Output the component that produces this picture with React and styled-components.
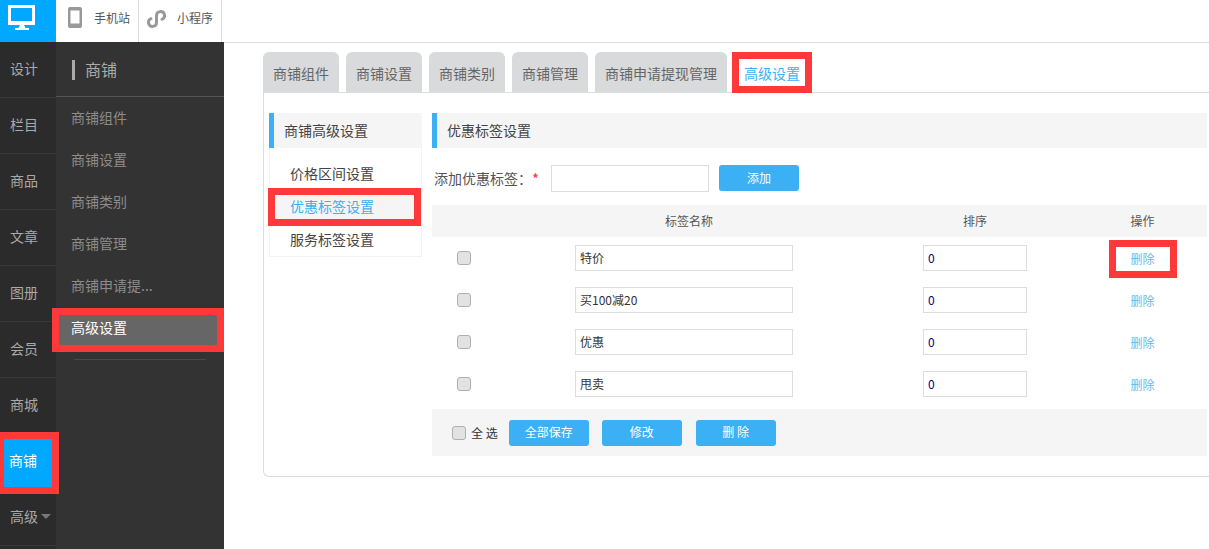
import styled, { createGlobalStyle } from "styled-components";

const GlobalStyle = createGlobalStyle`
    html, body {
        margin: 0;
        padding: 0;
        background: #fff;
        font-family: "Noto Sans CJK SC", "Liberation Sans", sans-serif;
    }
    * {
        box-sizing: border-box;
    }
`

const Page = styled.div`
    position: relative;
    width: 1209px;
    height: 549px;
    overflow: hidden;
    display: grid;
    grid-template-columns: 224px 1fr;
    grid-template-rows: 42px 1fr;
`

const TopBar = styled.div`
    grid-column: 1 / 3;
    display: flex;
    align-items: stretch;
    background: #fff;
`

const Logo = styled.div`
    width: 56px;
    padding: 5px 0 0 8px;
    background: #00a8ff;
`

const TopItem = styled.div`
    width: 83px;
    padding-left: ${props => props.$pad}px;
    padding-bottom: 8px;
    display: flex;
    align-items: center;
    gap: ${props => props.$gap}px;
    border-right: 1px solid #ddd;
    font-size: 12px;
    color: #555;
`

const IconBox = styled.span`
    display: flex;
    margin-top: ${props => props.$mt}px;
`

const NavRail = styled.div`
    display: flex;
    grid-row: 2;
    background: #333;
`

const MainNav = styled.div`
    width: 56px;
    background: #2b2b2b;
`

const MainNavItem = styled.div`
    height: 56px;
    padding-left: ${props => props.$active ? "9px" : "10px"};
    padding-bottom: 4px;
    display: flex;
    align-items: center;
    gap: 3px;
    font-size: 14px;
    color: ${props => props.$active ? "#fff" : "#a9a9a9"};
    border-bottom: 1px solid #383838;
    background: ${props => props.$active ? "#00a8ff" : "transparent"};
`

const Caret = styled.span`
    width: 0;
    height: 0;
    margin-top: 2px;
    border-left: 5px solid transparent;
    border-right: 5px solid transparent;
    border-top: 5px solid #777;
`

const SubNav = styled.div`
    width: 168px;
`

const SubTitle = styled.div`
    height: 55px;
    padding-left: 16px;
    display: flex;
    align-items: center;
    gap: 10px;
    font-size: 16px;
    color: #aaa;
    border-bottom: 1px solid #555;

    &::before {
        content: "";
        width: 3px;
        height: 20px;
        margin-top: 2px;
        background: #aaa;
    }
`

const SubList = styled.div`
    padding-top: 1px;
`

const SubItem = styled.div`
    height: ${props => props.$active ? "30px" : "42px"};
    margin: ${props => props.$active ? "7px 7px 0 3px" : "0"};
    padding-left: ${props => props.$active ? "12px" : "15px"};
    padding-bottom: ${props => props.$active ? "6px" : "4px"};
    display: flex;
    align-items: center;
    font-size: 14px;
    color: ${props => props.$active ? "#fff" : "#8c8c8c"};
    background: ${props => props.$active ? "#666" : "transparent"};
`

const SubDivider = styled.div`
    height: 1px;
    margin: 14px 18px 0;
    background: #4a4a4a;
`

const Content = styled.div`
    grid-row: 2;
    border-top: 1px solid #ddd;
    padding: 9px 2px 0 39px;
`

const Tabs = styled.div`
    display: flex;
    gap: 7px;
    height: 40px;
`

const Tab = styled.div`
    padding: 2px 10px 0;
    display: flex;
    align-items: center;
    font-size: 14px;
    color: ${props => props.$active ? "#3bb0f5" : "#666"};
    background: ${props => props.$active ? "#fff" : "#d9dadc"};
    border-radius: 6px 6px 0 0;
`

const Panel = styled.div`
    height: 385px;
    margin-right: -2px;
    padding: 20px 0 0 5px;
    border: 1px solid #ddd;
    border-right: 0;
    border-radius: 0 0 0 6px;
    display: flex;
    gap: 10px;
`

const SideMenu = styled.div`
    width: 153px;
    height: 144px;
    border: 1px solid #f3f3f3;
    border-top: 0;
`

const SectionHead = styled.div`
    height: 35px;
    padding: 0 0 2px 10px;
    display: flex;
    align-items: center;
    font-size: 14px;
    color: #444;
    background: #f5f5f5;
    border-left: 5px solid #3bb0f5;
`

const SideHead = styled(SectionHead)`
    margin: 0 -1px;
`

const SideLinks = styled.div`
    padding-top: 9px;
`

const SideLink = styled.div`
    height: 33px;
    padding: 0 0 2px 20px;
    display: flex;
    align-items: center;
    font-size: 14px;
    color: ${props => props.$active ? "#3bb0f5" : "#444"};
    background: ${props => props.$active ? "#f5f5f5" : "transparent"};
`

const Body = styled.div`
    width: 775px;
`

const AddRow = styled.div`
    height: 57px;
    padding: 4px 0 0 2px;
    display: flex;
    align-items: center;
    font-size: 14px;
    color: #555;
`

const AddLabel = styled.span`
    padding-bottom: 2px;
`

const Star = styled.span`
    color: #f33;
    font-size: 15px;
    margin-right: 12px;
`

const TextInput = styled.input`
    width: ${props => props.$w}px;
    height: ${props => props.$h}px;
    margin-left: ${props => props.$ml || 0}px;
    padding: 0 4px 2px;
    border: 1px solid #ddd;
    font: 12px "Noto Sans CJK SC", sans-serif;
    color: ${props => props.$num ? "#000080" : "#333"};
    outline: none;
`

const Button = styled.button`
    width: 80px;
    height: 26px;
    padding: 0 0 2px;
    border: 0;
    border-radius: 3px;
    margin-left: ${props => props.$ml}px;
    margin-bottom: ${props => props.$mb || 0}px;
    background: #3bb0f5;
    color: #fff;
    font: 12px "Noto Sans CJK SC", sans-serif;
`

const Row = styled.div`
    display: grid;
    grid-template-columns: 62px 390px 182px 1fr;
    align-items: center;
    height: ${props => props.$head ? "32px" : "42px"};
    padding-bottom: ${props => props.$head ? "2px" : "0"};
    background: ${props => props.$head ? "#f5f5f5" : "transparent"};
    font-size: 12px;
    color: #555;
`

const HeadCell = styled.div`
    text-align: center;
`

const OpCell = styled.div`
    text-align: center;
    padding-left: 12px;
`

const CheckCell = styled.div`
    padding-left: 25px;
    display: flex;
`

const SortCell = styled.div`
    display: flex;
    justify-content: center;
`

const Check = styled.span`
    display: block;
    width: 14px;
    height: 14px;
    border: 1px solid #b0b0b0;
    border-radius: 3px;
    background: #e2e2e2;
`

const DeleteLink = styled.span`
    color: #6bb8e8;
`

const Footer = styled.div`
    height: 47px;
    margin-top: 4px;
    padding-left: 20px;
    display: flex;
    align-items: center;
    background: #f5f5f5;
    font-size: 12px;
    color: #333;
`

const CheckLabel = styled.span`
    margin-left: 5px;
`

// the red marker boxes drawn over the screenshot
const Marker = styled.div`
    position: absolute;
    left: ${props => props.$x}px;
    top: ${props => props.$y}px;
    width: ${props => props.$w}px;
    height: ${props => props.$h}px;
    border: 7px solid #ff383a;
    pointer-events: none;
`

const MonitorIcon = () => (
    <svg width="27" height="25" viewBox="0 0 27 25" display="block">
        <path fill="#fff" fillRule="evenodd" d="M0 0h27v20H0zM3 3v13h21V3zM12 20h4l1.5 3H21v2H7v-2h3.500z" />
    </svg>
)

const PhoneIcon = () => (
    <svg width="14" height="21" viewBox="0 0 14 21">
        <path fill="#999" fillRule="evenodd" d="M2 0h10a2 2 0 0 1 2 2v17a2 2 0 0 1-2 2H2a2 2 0 0 1-2-2V2a2 2 0 0 1 2-2zM2.500 3.500v13h9v-13z" />
    </svg>
)

const MiniIcon = () => (
    <svg width="19" height="18" viewBox="0 0 19 18" fill="none">
        <path stroke="#999" strokeWidth="3" strokeLinecap="round" d="M4 8.700A4 4 0 1 0 9.500 12.500V5.500A4 4 0 1 1 15 9.300" />
    </svg>
)

const mainNav = ["设计", "栏目", "商品", "文章", "图册", "会员", "商城"]
const subNav = ["商铺组件", "商铺设置", "商铺类别", "商铺管理", "商铺申请提..."]
const tabs = ["商铺组件", "商铺设置", "商铺类别", "商铺管理", "商铺申请提现管理"]
const rows = ["特价", "买100减20", "优惠", "甩卖"]

const App = () => {
    return (
        <Page>
            <GlobalStyle />
            <TopBar>
                <Logo><MonitorIcon /></Logo>
                <TopItem $pad={12} $gap={12}><IconBox $mt={1}><PhoneIcon /></IconBox>手机站</TopItem>
                <TopItem $pad={8} $gap={11}><IconBox $mt={4}><MiniIcon /></IconBox>小程序</TopItem>
            </TopBar>
            <div />
            <NavRail>
                <MainNav>
                    {mainNav.map(name => <MainNavItem key={name}>{name}</MainNavItem>)}
                    <MainNavItem $active>商铺</MainNavItem>
                    <MainNavItem>高级<Caret /></MainNavItem>
                </MainNav>
                <SubNav>
                    <SubTitle>商铺</SubTitle>
                    <SubList>
                        {subNav.map(name => <SubItem key={name}>{name}</SubItem>)}
                        <SubItem $active>高级设置</SubItem>
                    </SubList>
                    <SubDivider />
                </SubNav>
            </NavRail>
            <Content>
                <Tabs>
                    {tabs.map(name => <Tab key={name}>{name}</Tab>)}
                    <Tab $active>高级设置</Tab>
                </Tabs>
                <Panel>
                    <SideMenu>
                        <SideHead>商铺高级设置</SideHead>
                        <SideLinks>
                            <SideLink>价格区间设置</SideLink>
                            <SideLink $active>优惠标签设置</SideLink>
                            <SideLink>服务标签设置</SideLink>
                        </SideLinks>
                    </SideMenu>
                    <Body>
                        <SectionHead>优惠标签设置</SectionHead>
                        <AddRow>
                            <AddLabel>添加优惠标签：</AddLabel><Star>*</Star>
                            <TextInput $w={158} $h={27} />
                            <Button $ml={10} $mb={1}>添加</Button>
                        </AddRow>
                        <Row $head>
                            <div />
                            <HeadCell>标签名称</HeadCell>
                            <HeadCell>排序</HeadCell>
                            <OpCell>操作</OpCell>
                        </Row>
                        {rows.map(name => (
                            <Row key={name}>
                                <CheckCell><Check /></CheckCell>
                                <div><TextInput $w={218} $h={26} $ml={81} defaultValue={name} /></div>
                                <SortCell><TextInput $w={104} $h={26} $num defaultValue="0" /></SortCell>
                                <OpCell><DeleteLink>删除</DeleteLink></OpCell>
                            </Row>
                        ))}
                        <Footer>
                            <Check />
                            <CheckLabel>全 选</CheckLabel>
                            <Button $ml={11}>全部保存</Button>
                            <Button $ml={13}>修改</Button>
                            <Button $ml={14}>删 除</Button>
                        </Footer>
                    </Body>
                </Panel>
            </Content>
            <Marker $x={732} $y={52} $w={80} $h={41} />
            <Marker $x={268} $y={188} $w={153} $h={38} />
            <Marker $x={1109} $y={240} $w={68} $h={38} />
            <Marker $x={52} $y={308} $w={172} $h={44} />
            <Marker $x={-3} $y={432} $w={62} $h={62} />
        </Page>
    )
}

export default App
